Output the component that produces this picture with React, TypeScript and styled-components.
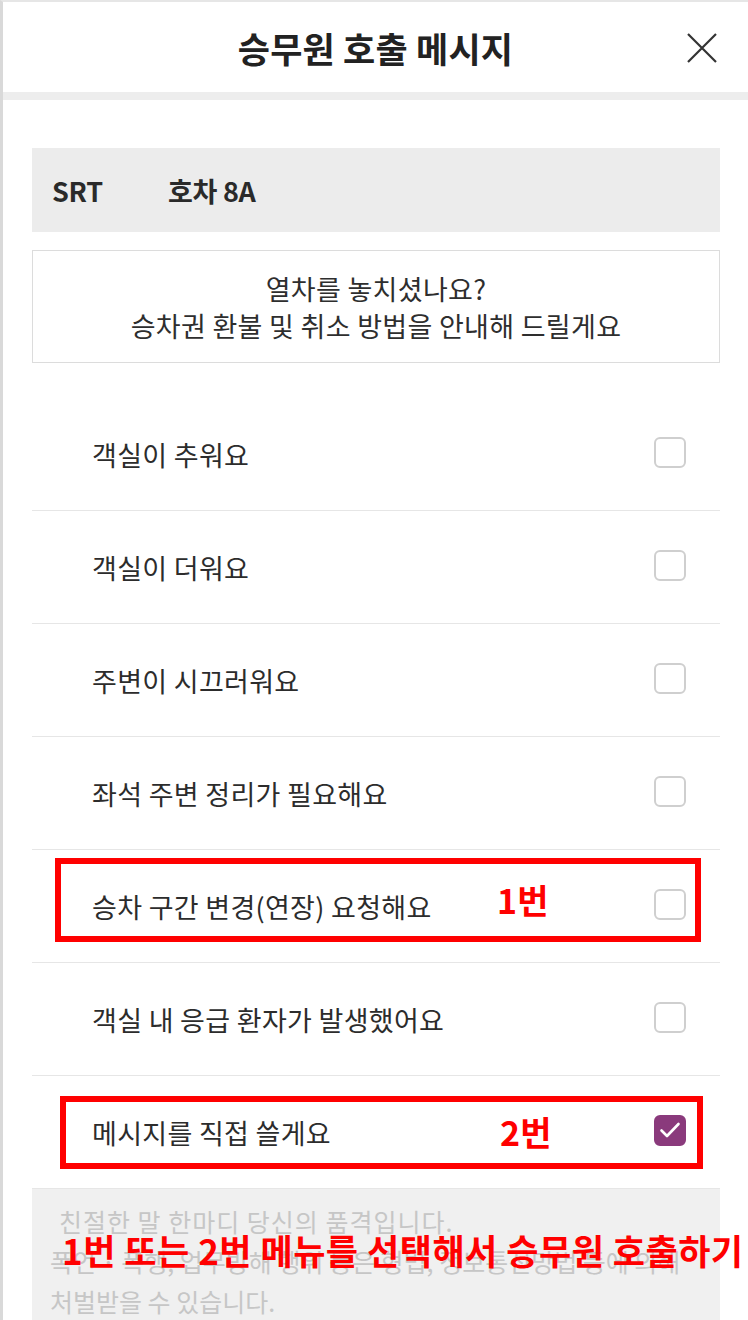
import React from 'react';
import styled, { createGlobalStyle } from 'styled-components';

const GlobalStyle = createGlobalStyle`
  * { box-sizing: border-box; }
  body {
    margin: 0;
    background: #fff;
    font-family: "Noto Sans CJK KR", "Noto Sans", sans-serif;
  }
`;

interface Option {
  label: string;
  checked?: boolean;
  mark?: { text: string; box: [number, number, number, number]; textLeft: number; textTop: number };
}

const options: Option[] = [
  { label: '객실이 추워요' },
  { label: '객실이 더워요' },
  { label: '주변이 시끄러워요' },
  { label: '좌석 주변 정리가 필요해요' },
  {
    label: '승차 구간 변경(연장) 요청해요',
    mark: { text: '1번', box: [23, 8, 646, 84], textLeft: 465, textTop: 30 },
  },
  { label: '객실 내 응급 환자가 발생했어요' },
  {
    label: '메시지를 직접 쓸게요',
    checked: true,
    mark: { text: '2번', box: [28, 20, 643, 73], textLeft: 468, textTop: 36 },
  },
];

const Page = styled.div`
  width: 748px;
  height: 1320px;
  overflow: hidden;
  border-left: 3px solid #d9d9d9;
  border-top: 2px solid #e6e6e6;
  background: #fff;
`;

const Header = styled.header`
  position: relative;
  height: 98px;
  display: flex;
  align-items: center;
  justify-content: center;
  border-bottom: 8px solid #ededed;
`;

const Title = styled.h1`
  margin: 0;
  font-size: 35px;
  font-weight: 700;
  color: #222;
  letter-spacing: 0.2px;
`;

const CloseButton = styled.button`
  position: absolute;
  right: 28px;
  top: 28px;
  width: 36px;
  height: 36px;
  padding: 0;
  border: none;
  background: none;
  display: flex;
  align-items: center;
  justify-content: center;
`;

const Content = styled.main`
  padding: 48px 28px 0 29px;
  display: flex;
  flex-direction: column;
`;

const TrainInfo = styled.div`
  height: 84px;
  background: #ececec;
  display: flex;
  align-items: center;
  padding-left: 20px;
  font-size: 27px;
  font-weight: 700;
  color: #2a2a2a;
  letter-spacing: -0.3px;
`;

const TrainName = styled.span`
  width: 116px;
`;

const Notice = styled.div`
  margin-top: 18px;
  height: 113px;
  border: 1px solid #dcdcdc;
  display: flex;
  flex-direction: column;
  align-items: center;
  justify-content: center;
  font-size: 27px;
  line-height: 37px;
  color: #2e2e2e;
  letter-spacing: 0.3px;
`;

const OptionList = styled.ul`
  list-style: none;
  margin: 35px 0 0;
  padding: 0;
`;

const Row = styled.li`
  position: relative;
  height: 113px;
  display: flex;
  align-items: center;
  justify-content: space-between;
  padding: 0 34px 0 60px;
  border-bottom: 1px solid #e6e6e6;
  font-size: 27px;
  color: #2c2c2c;
  letter-spacing: 0.3px;
`;

const Check = styled.span<{ $checked?: boolean }>`
  width: 32px;
  height: 31px;
  margin-top: -4px;
  border-radius: 6px;
  border: 2px solid ${(p) => (p.$checked ? '#8a3a7c' : '#cfcfcf')};
  background: ${(p) => (p.$checked ? '#8a3a7c' : '#fff')};
  display: flex;
  align-items: center;
  justify-content: center;
`;

const RedFrame = styled.span`
  position: absolute;
  border: 6px solid #ff0000;
  pointer-events: none;
`;

const RedLabel = styled.span`
  position: absolute;
  font-size: 34px;
  font-weight: 700;
  line-height: 40px;
  color: #ff0000;
`;

const MessageBox = styled.div`
  position: relative;
  height: 140px;
  background: #f0f0f0;
  padding: 12px 18px 0 18px;
  font-size: 25px;
  line-height: 40px;
  color: #c6c6c6;
`;

const Placeholder = styled.p<{ $indent?: number }>`
  margin: 0;
  padding-left: ${(p) => p.$indent ?? 0}px;
  white-space: nowrap;
  letter-spacing: ${(p) => (p.$indent ? 1 : 0)}px;
`;

const Caption = styled.div`
  position: absolute;
  left: 30px;
  top: 41px;
  font-size: 35px;
  font-weight: 700;
  line-height: 40px;
  color: #ff0000;
  white-space: nowrap;
  letter-spacing: 0.5px;
`;

const App: React.FC = () => (
  <>
    <GlobalStyle />
    <Page>
      <Header>
        <Title>승무원 호출 메시지</Title>
        <CloseButton aria-label="닫기">
          <svg width="32" height="32" viewBox="0 0 32 32">
            <path d="M2 2 L30 30 M30 2 L2 30" stroke="#333" strokeWidth="2.2" fill="none" />
          </svg>
        </CloseButton>
      </Header>
      <Content>
        <TrainInfo>
          <TrainName>SRT</TrainName>
          <span>호차 8A</span>
        </TrainInfo>
        <Notice>
          <span>열차를 놓치셨나요?</span>
          <span>승차권 환불 및 취소 방법을 안내해 드릴게요</span>
        </Notice>
        <OptionList>
          {options.map((opt) => (
            <Row key={opt.label}>
              <span>{opt.label}</span>
              <Check $checked={opt.checked}>
                {opt.checked && (
                  <svg width="22" height="18" viewBox="0 0 22 18">
                    <path d="M2.5 9.5 L8 15 L19.5 3" stroke="#fff" strokeWidth="2.6" fill="none" strokeLinecap="round" strokeLinejoin="round" />
                  </svg>
                )}
              </Check>
              {opt.mark && (
                <>
                  <RedFrame
                    style={{
                      left: opt.mark.box[0],
                      top: opt.mark.box[1],
                      width: opt.mark.box[2],
                      height: opt.mark.box[3],
                    }}
                  />
                  <RedLabel style={{ left: opt.mark.textLeft, top: opt.mark.textTop }}>{opt.mark.text}</RedLabel>
                </>
              )}
            </Row>
          ))}
        </OptionList>
        <MessageBox>
          <Placeholder $indent={9}>친절한 말 한마디 당신의 품격입니다.</Placeholder>
          <Placeholder>폭언 · 폭행, 업무방해 행위 등은 형법, 정보통신망법 등에 의해</Placeholder>
          <Placeholder>처벌받을 수 있습니다.</Placeholder>
          <Caption>1번 또는 2번 메뉴를 선택해서 승무원 호출하기</Caption>
        </MessageBox>
      </Content>
    </Page>
  </>
);

export default App;
